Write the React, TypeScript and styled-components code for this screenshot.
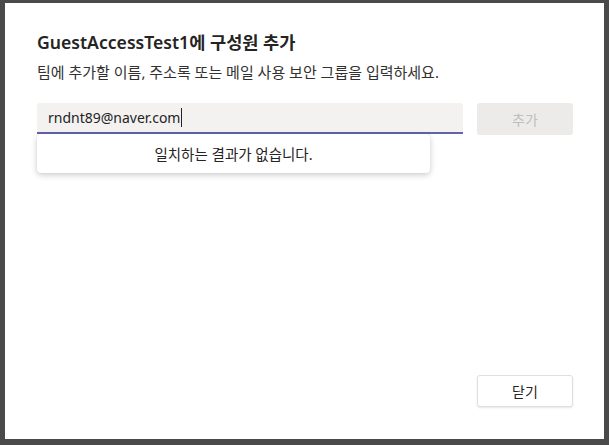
import React from 'react'
import styled, { createGlobalStyle } from 'styled-components'

const GlobalStyle = createGlobalStyle`
  html, body {
    margin: 0;
    padding: 0;
    background: #4a4a4a;
  }
  body {
    font-family: 'Segoe UI', 'Noto Sans', 'Noto Sans CJK KR', sans-serif;
    color: #252423;
  }
`

const Frame = styled.div`
  width: 609px;
  height: 445px;
  padding: 3px 5px 6px 5px;
  box-sizing: border-box;
`

const Dialog = styled.div`
  width: 100%;
  height: 100%;
  background: #ffffff;
  box-sizing: border-box;
  padding: 27px 31px 32px 32px;
  display: flex;
  flex-direction: column;
`

const Title = styled.h1`
  margin: 0;
  font-size: 17.6px;
  line-height: 24px;
  font-weight: 600;
  color: #252423;
`

const Subtitle = styled.p`
  margin: 8px 0 0;
  font-size: 15px;
  line-height: 20px;
  color: #323130;
`

const Row = styled.div`
  margin-top: 21px;
  display: flex;
  gap: 14px;
  align-items: flex-start;
`

const Field = styled.div`
  position: relative;
  flex: 1;
`

const Input = styled.div`
  height: 31px;
  box-sizing: border-box;
  background: #f3f2f1;
  border-radius: 3px 3px 0 0;
  border-bottom: 2px solid #6264a7;
  padding: 0 11px;
  display: flex;
  align-items: center;
  font-size: 14px;
  color: #252423;
`

const Caret = styled.span`
  display: inline-block;
  width: 1px;
  height: 19px;
  background: #252423;
  margin-left: 1px;
`

const Dropdown = styled.div`
  position: absolute;
  top: 31px;
  left: 0;
  width: 393px;
  height: 39px;
  background: #ffffff;
  border-radius: 4px;
  box-shadow: 0 2px 6px rgba(0, 0, 0, 0.2), 0 0 1px rgba(0, 0, 0, 0.12);
  display: flex;
  align-items: center;
  justify-content: center;
  font-size: 14.5px;
  color: #252423;
`

const Button = styled.button<{ $disabled?: boolean }>`
  width: 96px;
  height: 32px;
  box-sizing: border-box;
  border-radius: 3px;
  font-family: inherit;
  font-size: 14px;
  font-weight: 400;
  cursor: pointer;
  background: ${p => (p.$disabled ? '#edebe9' : '#ffffff')};
  color: ${p => (p.$disabled ? '#bebebe' : '#252423')};
  border: ${p => (p.$disabled ? 'none' : '1px solid #e1dfdd')};
  box-shadow: ${p => (p.$disabled ? 'none' : '0 1px 2px rgba(0, 0, 0, 0.1)')};
`

const Footer = styled.div`
  margin-top: auto;
  display: flex;
  justify-content: flex-end;
`

export default function App() {
  return (
    <>
      <GlobalStyle />
      <Frame>
        <Dialog>
          <Title>GuestAccessTest1에 구성원 추가</Title>
          <Subtitle>팀에 추가할 이름, 주소록 또는 메일 사용 보안 그룹을 입력하세요.</Subtitle>
          <Row>
            <Field>
              <Input>
                rndnt89@naver.com
                <Caret />
              </Input>
              <Dropdown>일치하는 결과가 없습니다.</Dropdown>
            </Field>
            <Button $disabled>추가</Button>
          </Row>
          <Footer>
            <Button>닫기</Button>
          </Footer>
        </Dialog>
      </Frame>
    </>
  )
}
